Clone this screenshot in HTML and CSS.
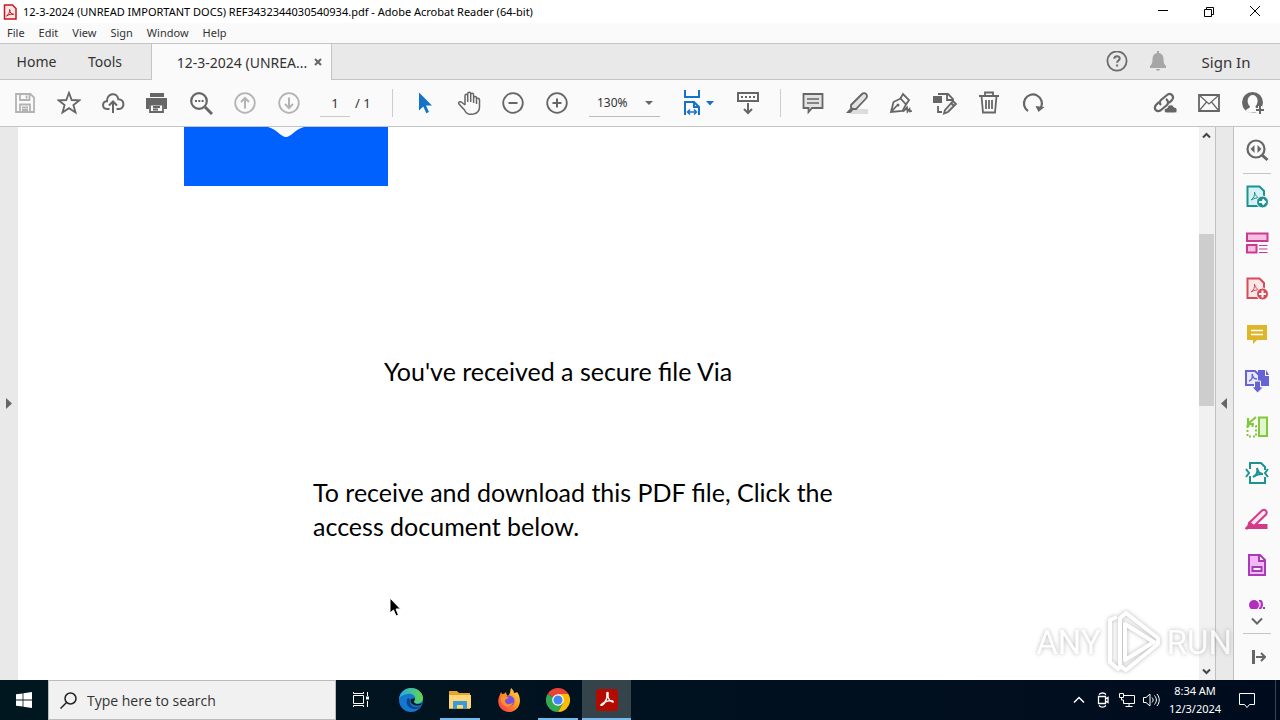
FILE: index.html
```html
<!DOCTYPE html>
<html lang="en">
<head>
    <meta charset="UTF-8">
    <meta name="viewport" content="width=device-width, initial-scale=1.0">
    <title>12-3-2024 (UNREAD IMPORTANT DOCS) REF3432344030540934.pdf - Adobe Acrobat Reader (64-bit)</title>
    <link rel="stylesheet" href="styles.css">
</head>
<body>
    <header class="titlebar">
        <svg class="app-icon" width="14" height="16" viewBox="0 0 14 16"><path d="M1.500 1h8L13 4.500V15H1.500z" fill="#fbe9e9" stroke="#c5161d" stroke-width="1.500"/><path d="M3.500 12c2-1 3.500-4 3.200-6.500 0 3 1.800 4.800 4 4.800-2-.6-5 .2-7.200 1.700z" fill="none" stroke="#c5161d"/></svg>
        <h1>12-3-2024 (UNREAD IMPORTANT DOCS) REF3432344030540934.pdf - Adobe Acrobat Reader (64-bit)</h1>
        <div class="window-buttons">
            <button type="button" aria-label="Minimize"><svg width="12" height="12" viewBox="0 0 12 12"><path d="M1 4.500h10"/></svg></button>
            <button type="button" aria-label="Restore"><svg width="12" height="12" viewBox="0 0 12 12"><path d="M1.500 3.500h7v7h-7zM3.500 3.500v-2h7v7h-2"/></svg></button>
            <button type="button" aria-label="Close"><svg width="12" height="12" viewBox="0 0 12 12"><path d="M1 0l10 10M11 0L1 10"/></svg></button>
        </div>
    </header>

    <nav class="menubar">
        <button type="button">File</button>
        <button type="button">Edit</button>
        <button type="button">View</button>
        <button type="button">Sign</button>
        <button type="button">Window</button>
        <button type="button">Help</button>
    </nav>

    <div class="tabs">
        <button type="button" class="tab-home">Home</button>
        <button type="button" class="tab-tools">Tools</button>
        <div class="tab-document">
            <button type="button" class="tab-name">12-3-2024 (UNREA...</button>
            <button type="button" class="tab-close" aria-label="Close tab"><svg width="8" height="8" viewBox="0 0 8 8"><path d="M1 1l6 6M7 1L1 7" stroke="#666" stroke-width="2"/></svg></button>
        </div>
        <div class="account">
            <button type="button" aria-label="Help"><svg width="22" height="22" viewBox="0 0 22 22" fill="none" stroke="#6b6b6b" stroke-width="1.800"><circle cx="11" cy="10" r="9.600"/><path d="M8.300 7.800c0-3.600 5.400-3.400 5.400-.3 0 2-2.600 2-2.600 4.200M11.100 13.500v2" stroke-width="2"/></svg></button>
            <button type="button" aria-label="Notifications"><svg width="20" height="22" viewBox="0 0 20 22" fill="#a6a6a6"><path d="M9 0h2v2c3 .6 4.500 3 4.500 6 0 4 .8 5.500 2.500 7v2H2v-2c1.700-1.500 2.500-3 2.500-7 0-3 1.500-5.400 4.500-6zM8 18h4c0 2.200-4 2.200-4 0z"/></svg></button>
            <button type="button" class="sign-in">Sign In</button>
        </div>
    </div>

    <div class="toolbar">
        <button type="button" class="tool disabled" aria-label="Save"><svg viewBox="0 0 24 24"><path d="M3 3h14.500L21 6.500V21H3zM7 3v6h9.500V3M13.500 4.500v3M7 21v-7.500h10V21M9 16.500h6M9 19h6"/></svg></button>
        <button type="button" class="tool" aria-label="Star"><svg viewBox="0 0 24 24"><path d="M12 1.800l2.700 7.200 7.700.3-6 4.800 2.100 7.400L12 17.200l-6.500 4.300 2.100-7.400-6-4.800 7.700-.3z"/></svg></button>
        <button type="button" class="tool" aria-label="Upload"><svg viewBox="0 0 24 24"><path d="M8.500 18H6c-5.500-.5-5-8 0-7.700C5.800 2 16 .5 17.300 8.200 24 8 24 18 18 18h-2.500M12 22V11M8 14.500l4-4 4 4" stroke-width="2"/></svg></button>
        <button type="button" class="tool" aria-label="Print"><svg viewBox="0 0 24 24"><path d="M5 2h14v4H5zM1 7h21v11h-3v-4H4v4H1z" fill="#666" stroke="none"/><path d="M5 13.500h13V21H5zM8 16h7M8 18.500h5"/></svg></button>
        <button type="button" class="tool" aria-label="Find"><svg viewBox="0 0 24 24"><circle cx="10" cy="10" r="7.800" stroke-width="2.200"/><path d="M16 16l7 7" stroke-width="3"/><path d="M6 10h2M9.300 10h2M12.600 10h2" stroke-width="2"/></svg></button>
        <button type="button" class="tool disabled" aria-label="Previous page"><svg viewBox="0 0 24 24"><circle cx="12" cy="12" r="9.800"/><path d="M12 17.500V7M8 11l4-4 4 4" stroke-width="2"/></svg></button>
        <button type="button" class="tool disabled" aria-label="Next page"><svg viewBox="0 0 24 24"><circle cx="12" cy="12" r="9.800"/><path d="M12 6.500V17M8 13l4 4 4-4" stroke-width="2"/></svg></button>
        <div class="page-box">
            <input type="text" value="1" aria-label="Page number">
            <span>/ 1</span>
        </div>
        <span class="divider"></span>
        <button type="button" class="tool" aria-label="Select"><svg viewBox="0 0 24 24"><path d="M6 1.500v18l4.300-4 3 6.800 2.700-1.300-3-6.500h6z" fill="#1473c8" stroke="none"/></svg></button>
        <button type="button" class="tool" aria-label="Hand"><svg viewBox="0 0 24 24"><path d="M8 14V5c0-2.300 2.700-2.300 2.700 0v6-8c0-2.300 3-2.300 3 0v8-7c0-2.200 2.900-2.200 2.900 0v8-5c0-2 2.900-2 2.900 0 0 0 3 0 3 2v7c0 8-12 10-15 3l-5.500-6c-1-2 1-3 3-1.500L8 14M19.500 7v6" stroke-width="1.500"/></svg></button>
        <button type="button" class="tool" aria-label="Zoom out"><svg viewBox="0 0 24 24"><circle cx="12" cy="12" r="9.800"/><path d="M7.500 12h9" stroke-width="2"/></svg></button>
        <button type="button" class="tool" aria-label="Zoom in"><svg viewBox="0 0 24 24"><circle cx="12" cy="12" r="9.800"/><path d="M7.500 12h9M12 7.500v9" stroke-width="2"/></svg></button>
        <div class="zoom-box">
            <select aria-label="Zoom level"><option>130%</option></select>
        </div>
        <button type="button" class="fit" aria-label="Fit width">
            <svg width="20" height="26" viewBox="0 0 20 26" fill="none" stroke="#1473c8" stroke-width="2"><path d="M3 0v7h14V0M3 25V12h9l5 5v8M12 12v5h5"/><path d="M6 22h8M8 19.500L5.500 22 8 24.500M12 19.500l2.500 2.500-2.500 2.500" stroke-width="1.500"/></svg>
            <svg width="8" height="5" viewBox="0 0 8 5"><path d="M0 0h8L4 4.500z" fill="#1473c8"/></svg>
        </button>
        <button type="button" class="tool" aria-label="Scrolling"><svg viewBox="0 0 24 24"><path d="M2 2h20v8H2zM12 12v10M8 18l4 4 4-4" stroke-width="2"/><path d="M5 6h14" stroke-width="2" stroke-dasharray="2 2"/></svg></button>
        <span class="divider"></span>
        <button type="button" class="tool" aria-label="Comment"><svg viewBox="0 0 24 24"><path d="M2.500 3h19v14H11l-3.500 4v-4h-5z" fill="#e2e2e2"/><path d="M6 8h12M6 12h12" stroke-width="1.500"/></svg></button>
        <button type="button" class="tool" aria-label="Highlight"><svg viewBox="0 0 24 24"><path d="M9 18h14v5H5z" fill="#dcdcdc" stroke="none"/><path d="M6 14L17 3c2-2 5-.5 5 2 0 1-.3 1.600-1 2.500L11 18H7.500L6 16.500z" fill="#e2e2e2"/><path d="M5.500 17L8 19.500 5.500 22H1z" fill="#666" stroke="none"/></svg></button>
        <button type="button" class="tool" aria-label="Sign"><svg viewBox="0 0 24 24"><path d="M2 21L4.500 11l7-3.500 5.500 6L13.500 20zM2 21l6-6.500"/><circle cx="9" cy="14" r="1.500" fill="#666" stroke="none"/><path d="M11.500 7.500L14 3l6 6-3 4.500"/><path d="M14 20.500l4-4 .5 4 2-2.500.5 2.500 2-.5"/></svg></button>
        <button type="button" class="tool" aria-label="Edit"><svg viewBox="0 0 24 24"><path d="M5 3h10l5 5v2M14 3v6h6M5 15v6h4"/><path d="M0 5h9v7H0z" fill="#666" stroke="none"/><path d="M12 19l8-9 3 3-8 8-4 1.500zM18 12l3 3" fill="#e2e2e2"/></svg></button>
        <button type="button" class="tool" aria-label="Delete"><svg viewBox="0 0 24 24"><path d="M2 5h20M8 5V1.500h8V5M4.500 5L6 21.500h12L19.500 5M9 9v9M12 9v9M15 9v9"/></svg></button>
        <button type="button" class="tool" aria-label="Rotate"><svg viewBox="0 0 24 24"><path d="M7 20A9 9 0 1 1 20 16.500" stroke-width="2.200"/><path d="M14.500 15l9 1-6 5z" fill="#666" stroke="none"/></svg></button>
        <div class="share">
            <button type="button" class="tool" aria-label="Share link"><svg viewBox="0 0 24 24"><path d="M8 14c-2-2-1-4 0-5l6-5c3-3 8 1 5 5l-3 3M13 8c3 2 2 5 1 6l-6 5c-4 3-8-1-5-5l3-3" stroke-width="2.200"/><path d="M13 22c-3-1-2-5 1-5 1-4 6-4 7-1 4 0 4 6 1 6z" fill="#666" stroke="#fafafa" stroke-width="1"/></svg></button>
            <button type="button" class="tool" aria-label="Email"><svg viewBox="0 0 24 24"><path d="M2 4h20v16H2z"/><path d="M2 4l10 9L22 4M2 20l7.500-9M22 20l-7.500-9" stroke-width="1.200"/></svg></button>
            <button type="button" class="tool" aria-label="Add people"><svg viewBox="0 0 24 24"><circle cx="11.500" cy="11.500" r="10.500" fill="#666" stroke="none"/><path d="M5 20c0-2.500 4-2.500 4-4.500C4.500 11 7 4 11.700 4s7 7 2.700 11.500c0 1.500 2 2 3.600 2.500-3 4-9 5-13 2z" fill="#fafafa" stroke="none"/><path d="M14 19h9M19 15v8" stroke="#fafafa" stroke-width="4"/><path d="M15 19h8M19 15v8" stroke-width="2"/></svg></button>
        </div>
    </div>

    <main class="workspace">
        <button type="button" class="left-strip" aria-label="Show navigation pane"><svg width="6" height="12" viewBox="0 0 6 12"><path d="M0 0v11l6-5.500z" fill="#666"/></svg></button>
        <section class="document">
            <svg class="logo" width="204" height="59" viewBox="0 0 204 59"><path d="M0 0h204v59H0z" fill="#0061fe"/><path d="M84 0h36c-10 3-13 10-18 10S94 3 84 0z" fill="#fafafa"/></svg>
            <p class="lead">You've received a secure file Via</p>
            <p class="info">To receive and download this PDF file, Click the<br>access document below.</p>
            <svg class="pointer" width="12" height="20" viewBox="0 0 12 20"><path d="M1 1v15l3.500-3 2.500 6 2.500-1-2.500-6h4.500z" fill="#000" stroke="#fff"/></svg>
        </section>
        <div class="scrollbar">
            <button type="button" aria-label="Scroll up"><svg width="9" height="7" viewBox="0 0 9 7"><path d="M1 5.500l3.500-3.500L8 5.500" fill="none" stroke="#444" stroke-width="2"/></svg></button>
            <div class="track"><div class="thumb"></div></div>
            <button type="button" aria-label="Scroll down"><svg width="9" height="7" viewBox="0 0 9 7"><path d="M1 1.500L4.500 5 8 1.500" fill="none" stroke="#444" stroke-width="2"/></svg></button>
        </div>
        <button type="button" class="right-strip" aria-label="Hide tools pane"><svg width="8" height="12" viewBox="0 0 8 12"><path d="M6 0v11L0 5.500z" fill="#666"/></svg></button>
        <aside class="tools-pane">
            <button type="button" class="pane-search" aria-label="Search tools"><svg viewBox="0 0 24 24" stroke="#666"><circle cx="11" cy="11" r="8.500" stroke-width="2.200"/><path d="M17 17l5.500 5" stroke-width="3"/><path d="M9.500 7v8L5.500 11zM12.500 7v8l4-4z" fill="#666" stroke="none"/></svg></button>
            <button type="button" aria-label="Export PDF"><svg viewBox="0 0 24 24" stroke="#1c9390"><path d="M2.500 1.500h12L19 6v15H2.500z" fill="#d7f0f4"/><path d="M6 15c3-2 4-5 3.500-8 1 4 3 6 6 6-4-.5-7 .5-9.500 2" stroke-width="1"/><circle cx="17.500" cy="17" r="6" fill="#1c9390" stroke="#fafafa" stroke-width="1"/><path d="M14 17h6M17.500 14.500L20 17l-2.500 2.500" stroke="#fff"/></svg></button>
            <button type="button" aria-label="Organize pages"><svg viewBox="0 0 24 24" stroke="#cb3a8f"><path d="M2 2.500h20.500V10H2zM2 14h9.500v7.500H2z" fill="#f8bfe5"/><path d="M14 14.500h8.500M14 18h8.500M14 21.500h8.500" stroke-width="1"/></svg></button>
            <button type="button" aria-label="Create PDF"><svg viewBox="0 0 24 24" stroke="#d74b58"><path d="M2.500 1.500h12L19 6v15H2.500z" fill="#fbe7e8"/><path d="M6 15c3-2 4-5 3.500-8 1 4 3 6 6 6-4-.5-7 .5-9.500 2" stroke-width="1"/><circle cx="17.500" cy="17" r="6" fill="#d74b58" stroke="#fafafa" stroke-width="1"/><path d="M14 17h7M17.500 13.500v7" stroke="#fff"/></svg></button>
            <button type="button" aria-label="Comment"><svg viewBox="0 0 24 24" stroke="#fff"><path d="M2 2h20v15H12l-4 4v-4H2z" fill="#dfb52a" stroke="none"/><path d="M6 7.500h12M6 11.500h12" stroke-width="1.500"/></svg></button>
            <button type="button" aria-label="Combine files"><svg viewBox="0 0 24 24" stroke="#6663d4"><path d="M13 1h7v6h4v10H13z" fill="#6663d4" stroke="none"/><path d="M21 1v5h3z" fill="#6663d4" stroke="none"/><path d="M1 2h9l4 4v10H1z" fill="#e8e8ff"/><path d="M4 12c3-1 4-4 3-7 1 4 2 5 5 5" stroke-width="1.500"/><path d="M9.500 12h6v6h3L12.500 24 7 18h2.500z" fill="#6663d4" stroke="#fafafa" stroke-width="1"/></svg></button>
            <button type="button" aria-label="Compress pages"><svg viewBox="0 0 24 24" stroke="#82c83c"><path d="M14 2.500h8V21h-8z" fill="#e1f5ce"/><path d="M2.500 11h8.500v10.500H2.500z" stroke-dasharray="2 2"/><path d="M11 2L4 8M3 3v6h6" stroke-width="2.200"/></svg></button>
            <button type="button" aria-label="Compress PDF"><svg viewBox="0 0 24 24" stroke="#1c9390"><path d="M5 8V2h11l4 4v3M5 15v7h15v-6"/><path d="M8 16c4-2 5-5 4-9 1 5 3 6 6 6-4-.5-7 .5-10 3"/><path d="M1 8l3 4-3 4M23 8l-3 4 3 4"/></svg></button>
            <button type="button" aria-label="Redact"><svg viewBox="0 0 24 24" stroke="#d33b88"><path d="M0 21l4-4h18.500v5H0z" fill="#d33b88" stroke="none"/><path d="M4 16L17 3.500c3-2 6 1 4 4L9 19l-6 2z" fill="#fce4f0"/><path d="M3 21l2-5 4 3z" fill="#d33b88"/></svg></button>
            <button type="button" aria-label="Prepare form"><svg viewBox="0 0 24 24" stroke="#a93bb6"><path d="M4 2h11l5 5v15H4zM14 2v6h6" fill="#f2b9f8"/><path d="M7.500 14h9v4h-9z" fill="#fff"/></svg></button>
            <button type="button" class="pane-cut" aria-label="More tools"><svg width="24" height="9" viewBox="0 0 24 9" stroke="none"><circle cx="9" cy="5" r="5" fill="#b030bd"/><path d="M14 0c4 1 4 8 0 9" stroke="#b030bd" fill="#f2b9f8"/><path d="M18 7h2v2h-2z" fill="#b030bd"/></svg></button>
            <button type="button" class="pane-more" aria-label="Scroll tools"><svg width="14" height="8" viewBox="0 0 14 8" stroke="#666"><path d="M2 1.500l5 5 5-5" stroke-width="2"/></svg></button>
            <button type="button" class="pane-collapse" aria-label="Collapse tools"><svg width="18" height="16" viewBox="0 0 18 16" stroke="#666"><path d="M5.500 1v14" stroke-width="3"/><path d="M8 8h8M13 4l4 4-4 4" stroke-width="2"/></svg></button>
        </aside>
        <div class="watermark">
            <span>ANY</span>
            <svg width="58" height="64" viewBox="0 0 58 64" fill="none" stroke="#fff" stroke-width="4" stroke-linejoin="round"><path d="M12 7l-7 3v42l8 7 2-1M20 14v36l29-18zM15 56V8l6-5 32 25v6L21 60z"/></svg>
            <span>RUN</span>
        </div>
    </main>

    <footer class="taskbar">
        <button type="button" class="start" aria-label="Start"><svg width="16" height="16" viewBox="0 0 16 16" fill="#fff"><path d="M0 2.300L6.600 1.400v6.100H0zM7.400 1.300L16 0v7.500H7.400zM0 8.400h6.600v6.200L0 13.700zM7.400 8.400H16V16l-8.600-1.200z"/></svg></button>
        <label class="search">
            <svg width="17" height="17" viewBox="0 0 17 17" fill="none" stroke="#222" stroke-width="1.500"><circle cx="10.500" cy="6.500" r="5.500"/><path d="M6.500 10.500l-6 6"/></svg>
            <input type="text" placeholder="Type here to search" aria-label="Type here to search">
        </label>
        <button type="button" class="task task-view" aria-label="Task view"><svg width="18" height="18" viewBox="0 0 18 18" fill="none" stroke="#fff"><path d="M1.500 4.500h10v8h-10zM1.500 1v1.500h10V1M1.500 16v-1.500h10V16M15.500 1v4M15.500 10v6"/><path d="M14 5.500h3v3h-3z" fill="#fff" stroke="none"/></svg></button>
        <button type="button" class="task" aria-label="Edge"><svg width="24" height="24" viewBox="0 0 24 24">
            <defs><linearGradient id="edgeTop" x2="1"><stop stop-color="#25a9e6"/><stop offset="1" stop-color="#63d64c"/></linearGradient></defs>
            <circle cx="12" cy="12" r="12" fill="#1478cf"/><path d="M0 11C1 4 6 0 12 0c7 0 12 5 12 10 0 6-8 7-9 4-.4-1 1-1 1-4 0-3-4-5-8-4-4 .5-7 2.500-8 5z" fill="url(#edgeTop)"/><path d="M9 10c-4 5 1 12 8 11 2-.3 4-1.500 5-3-3 2-12 2-11-6 0-1-1-2-2-2z" fill="#0c478e"/><path d="M12 11c-2 4 3 8 10 6l1-2c-3 2-8 1-8-1-.5-1 1-1 1-4z" fill="#011720"/></svg></button>
        <button type="button" class="task running" aria-label="File Explorer"><svg width="22" height="20" viewBox="0 0 22 20"><path d="M0 1h8l2 2h11v16H0z" fill="#e5a52b"/><path d="M0 5h22v13H0z" fill="#ffd778"/><path d="M4 11h14v8h-4v-4H8v4H4z" fill="#3a9bdb"/></svg></button>
        <button type="button" class="task" aria-label="Firefox"><svg width="24" height="24" viewBox="0 0 24 24">
            <defs><linearGradient id="foxFire" x1="1" x2="0" y2="1"><stop stop-color="#ffe34a"/><stop offset=".5" stop-color="#ff8b24"/><stop offset="1" stop-color="#f52462"/></linearGradient></defs>
            <path d="M14 0c2 2 3 3 3 5 2 0 3-1 3-1 5 6 4 18-6 20C5 25-1 17 2 9l2-5c1 2 1 2 2 2s2-1 3-2c0 2 1 3 2 4 3-3 2-6 3-8z" fill="url(#foxFire)"/><circle cx="12" cy="13" r="5.500" fill="#7551df"/><path d="M4 9c3-2 6-1 8 1-2 1-4 1-4 3 0 4 6 4 8 1-1 7-10 6-12-1z" fill="#ff9128"/></svg></button>
        <button type="button" class="task running" aria-label="Chrome"><svg width="24" height="24" viewBox="0 0 24 24"><path d="M12 12L1.600 6A12 12 0 0 1 22.400 6z" fill="#ea4335"/><path d="M12 12L1.600 6A12 12 0 0 0 12 24l5-9z" fill="#34a853"/><path d="M12 12l5 3-5 9A12 12 0 0 0 22.400 6H12z" fill="#fbbc05"/><circle cx="12" cy="12" r="5.800" fill="#fff"/><circle cx="12" cy="12" r="4.600" fill="#4285f4"/></svg></button>
        <button type="button" class="task active" aria-label="Acrobat Reader"><svg width="22" height="22" viewBox="0 0 22 22"><rect width="22" height="22" rx="3" fill="#b30b00"/><path d="M5 16c2 1 7-6 6-11-.5-2 1.500-2 1 0-1 5 3 8 5 8 1-2-8-2-12 3z" fill="none" stroke="#fff" stroke-width="1.500"/></svg></button>
        <div class="tray">
            <button type="button" aria-label="Hidden icons"><svg width="14" height="14" viewBox="0 0 14 14"><path d="M2 9.500l5-5 5 5" stroke-width="1.500"/></svg></button>
            <button type="button" aria-label="Camera"><svg width="16" height="18" viewBox="0 0 16 18"><path d="M3.500 5.500h7v7h-7zM10.500 8l2.500-1.500v5L10.500 10M4 3.500c2-2 5-2 7 0M4 14.500c2 2 5 2 7 0" stroke-width="1.300"/></svg></button>
            <button type="button" aria-label="Network"><svg width="16" height="16" viewBox="0 0 16 16"><path d="M5 3.500h10.500v8H4.500V8M10 11.500v3M6.500 14.500h7M.5 1.500h4v4h-4zM2.500 5.500V8h2"/></svg></button>
            <button type="button" aria-label="Volume"><svg width="18" height="16" viewBox="0 0 18 16"><path d="M1.500 5.500H4l4-3.500v12l-4-3.500H1.500zM10 5.500c1.500 1.500 1.500 3.500 0 5M12.500 3.500c2.500 3 2.500 6 0 9M15 2c3 4 3 8 0 12"/></svg></button>
            <button type="button" class="clock">8:34 AM<br>12/3/2024</button>
            <button type="button" class="action-center" aria-label="Notifications"><svg width="18" height="18" viewBox="0 0 18 18"><path d="M1.500 2.500h15v11h-5l-2.500 3-2.500-3h-5z"/></svg></button>
        </div>
    </footer>
</body>
</html>
```

FILE: styles.css
```css
* {
    box-sizing: border-box;
}

body {
    margin: 0;
    height: 100vh;
    display: flex;
    flex-direction: column;
    overflow: hidden;
    font-family: "Noto Sans", "Open Sans", sans-serif;
    font-size: 12px;
    color: #333;
    background: #fafafa;
}

button, input, select {
    margin: 0;
    padding: 0;
    border: none;
    background: none;
    font: inherit;
    color: inherit;
}

button {
    display: flex;
    align-items: center;
    justify-content: center;
}

svg {
    display: block;
    flex-shrink: 0;
}

/* Title and menus */
.titlebar {
    display: flex;
    align-items: center;
    height: 23px;
    padding-left: 3px;
    background: #fff;
    color: #000;
}

.titlebar h1 {
    margin: 0 0 0 6px;
    font-size: 11px;
    font-weight: normal;
    line-height: 20px;
    white-space: nowrap;
}

.window-buttons {
    display: flex;
    margin-left: auto;
    padding-right: 2px;
}

.window-buttons button {
    width: 46px;
    height: 22px;
}

.window-buttons svg {
    fill: none;
    stroke: #000;
}

.menubar {
    display: flex;
    gap: 14px;
    height: 20px;
    padding: 0 7px 2px;
    font-size: 11px;
}

/* Tabs */
.tabs {
    display: flex;
    height: 37px;
    border-top: 1px solid #c4c4c4;
    border-bottom: 1px solid #c4c4c4;
    background: #e9e9e9;
    font-size: 14px;
}

.tab-home {
    width: 73px;
}

.tab-tools {
    width: 64px;
}

.tab-document {
    display: flex;
    width: 181px;
    margin: 0 0 -1px 14px;
    padding-left: 25px;
    border-left: 1px solid #c4c4c4;
    border-right: 1px solid #c4c4c4;
    background: #fafafa;
    white-space: nowrap;
}

.tab-name {
    width: 130px;
}

.tab-close {
    width: 22px;
}

.account {
    display: flex;
    margin-left: auto;
    padding-right: 26px;
}

.account button {
    width: 41px;
}

.account .sign-in {
    width: 56px;
    margin-left: 20px;
    font-size: 15px;
    white-space: nowrap;
}

/* Toolbar */
.toolbar {
    display: flex;
    align-items: center;
    height: 47px;
    padding: 0 5px 0 3px;
    border-bottom: 1px solid #c4c4c4;
}

.tool {
    width: 44px;
    height: 44px;
}

.tool svg {
    width: 24px;
    height: 24px;
    fill: none;
    stroke: #666;
    stroke-width: 1.8;
}

.disabled svg {
    stroke: #b3b3b3;
}

.page-box {
    display: flex;
    align-items: center;
    gap: 5px;
    width: 81px;
    padding-left: 9px;
    font-size: 13px;
}

.page-box input {
    width: 30px;
    height: 27px;
    border-bottom: 1px solid #c8cfb8;
    text-align: center;
}

.divider {
    width: 1px;
    height: 28px;
    margin-right: 10px;
    background: #ccc;
}

.zoom-box {
    display: grid;
    align-items: center;
    margin: 0 20px 0 10px;
}

.zoom-box select, .zoom-box::after {
    grid-area: 1 / 1;
}

.zoom-box select {
    width: 71px;
    height: 27px;
    padding-left: 8px;
    border-bottom: 1px solid #bbb;
    appearance: none;
}

.zoom-box::after {
    content: "";
    justify-self: end;
    margin-right: 7px;
    border: 4px solid transparent;
    border-top-color: #666;
    border-bottom: 0;
    pointer-events: none;
}

.fit {
    gap: 4px;
    width: 36px;
    margin-right: 10px;
}

.toolbar .divider:nth-last-of-type(1) {
    margin-left: 10px;
}

.share {
    display: flex;
    margin-left: auto;
}

/* Document area */
.workspace {
    position: relative;
    display: flex;
    flex: 1;
    min-height: 0;
}

.left-strip, .right-strip {
    width: 18px;
    background: #e9e9e9;
}

.right-strip {
    border-left: 1px solid #c0c0c0;
    border-right: 1px solid #c0c0c0;
    width: 19px;
}

.document {
    position: relative;
    flex: 1;
    background: #fff;
    color: #000;
    font-family: Lato, sans-serif;
    font-size: 25px;
    line-height: 34px;
}

.logo {
    margin-left: 166px;
}

.document p {
    margin: 0;
    white-space: nowrap;
}

.document .lead {
    margin: 168px 0 87px 366px;
}

.document .info {
    margin-left: 295px;
}

.pointer {
    position: absolute;
    left: 371px;
    top: 470px;
}

.scrollbar {
    display: flex;
    flex-direction: column;
    width: 16px;
    padding-right: 1px;
    background: #f1f1f1;
}

.scrollbar button {
    height: 17px;
}

.track {
    flex: 1;
    padding-top: 90px;
}

.thumb {
    height: 172px;
    background: #cdcdcd;
}

/* Tools pane */
.tools-pane {
    display: flex;
    flex-direction: column;
    align-items: center;
    width: 46px;
}

.tools-pane button {
    width: 28px;
    height: 46px;
}

.tools-pane svg {
    fill: none;
    stroke-width: 2;
}

.tools-pane svg[viewBox="0 0 24 24"] {
    width: 24px;
    height: 24px;
}

.tools-pane .pane-search {
    height: 47px;
    border-bottom: 1px solid #c4c4c4;
}

.tools-pane .pane-cut {
    align-items: flex-end;
    height: 21px;
}

.tools-pane .pane-more {
    height: 25px;
    border-bottom: 1px solid #c4c4c4;
}

.watermark {
    position: absolute;
    right: 48px;
    bottom: 6px;
    display: flex;
    align-items: center;
    gap: 4px;
    color: #fff;
    font-family: "Liberation Sans Narrow", Roboto, sans-serif;
    font-size: 33px;
    opacity: 0.7;
    filter: drop-shadow(0 0 2px #999);
    pointer-events: none;
}

/* Taskbar */
.taskbar {
    display: flex;
    height: 40px;
    background: linear-gradient(90deg, #011720, #000c1e);
    color: #fff;
}

.start {
    width: 48px;
}

.search {
    display: flex;
    align-items: center;
    gap: 10px;
    width: 288px;
    padding-left: 11px;
    border: 1px solid #bbb;
    background: #f1f1f1;
    color: #333;
}

.search input {
    flex: 1;
    min-width: 0;
    font-family: "Open Sans", sans-serif;
    font-size: 14px;
}

.search input::placeholder {
    color: #333;
}

.task {
    position: relative;
    width: 49px;
}

.task-view {
    width: 50px;
}

.running::after, .active::after {
    content: "";
    position: absolute;
    left: 5px;
    right: 4px;
    bottom: 0;
    height: 2px;
    background: #76b9ed;
}

.active {
    background: #35434b;
}

.active::after {
    left: 0;
    right: 0;
}

.tray {
    display: flex;
    margin-left: auto;
    margin-right: 4px;
    padding-right: 8px;
    border-right: 1px solid #38424d;
}

.tray button {
    width: 24px;
}

.tray svg {
    fill: none;
    stroke: #fff;
}

.tray .clock {
    display: block;
    width: 64px;
    font-size: 11px;
    line-height: 18px;
    text-align: center;
}

.tray .action-center {
    width: 40px;
}
```
